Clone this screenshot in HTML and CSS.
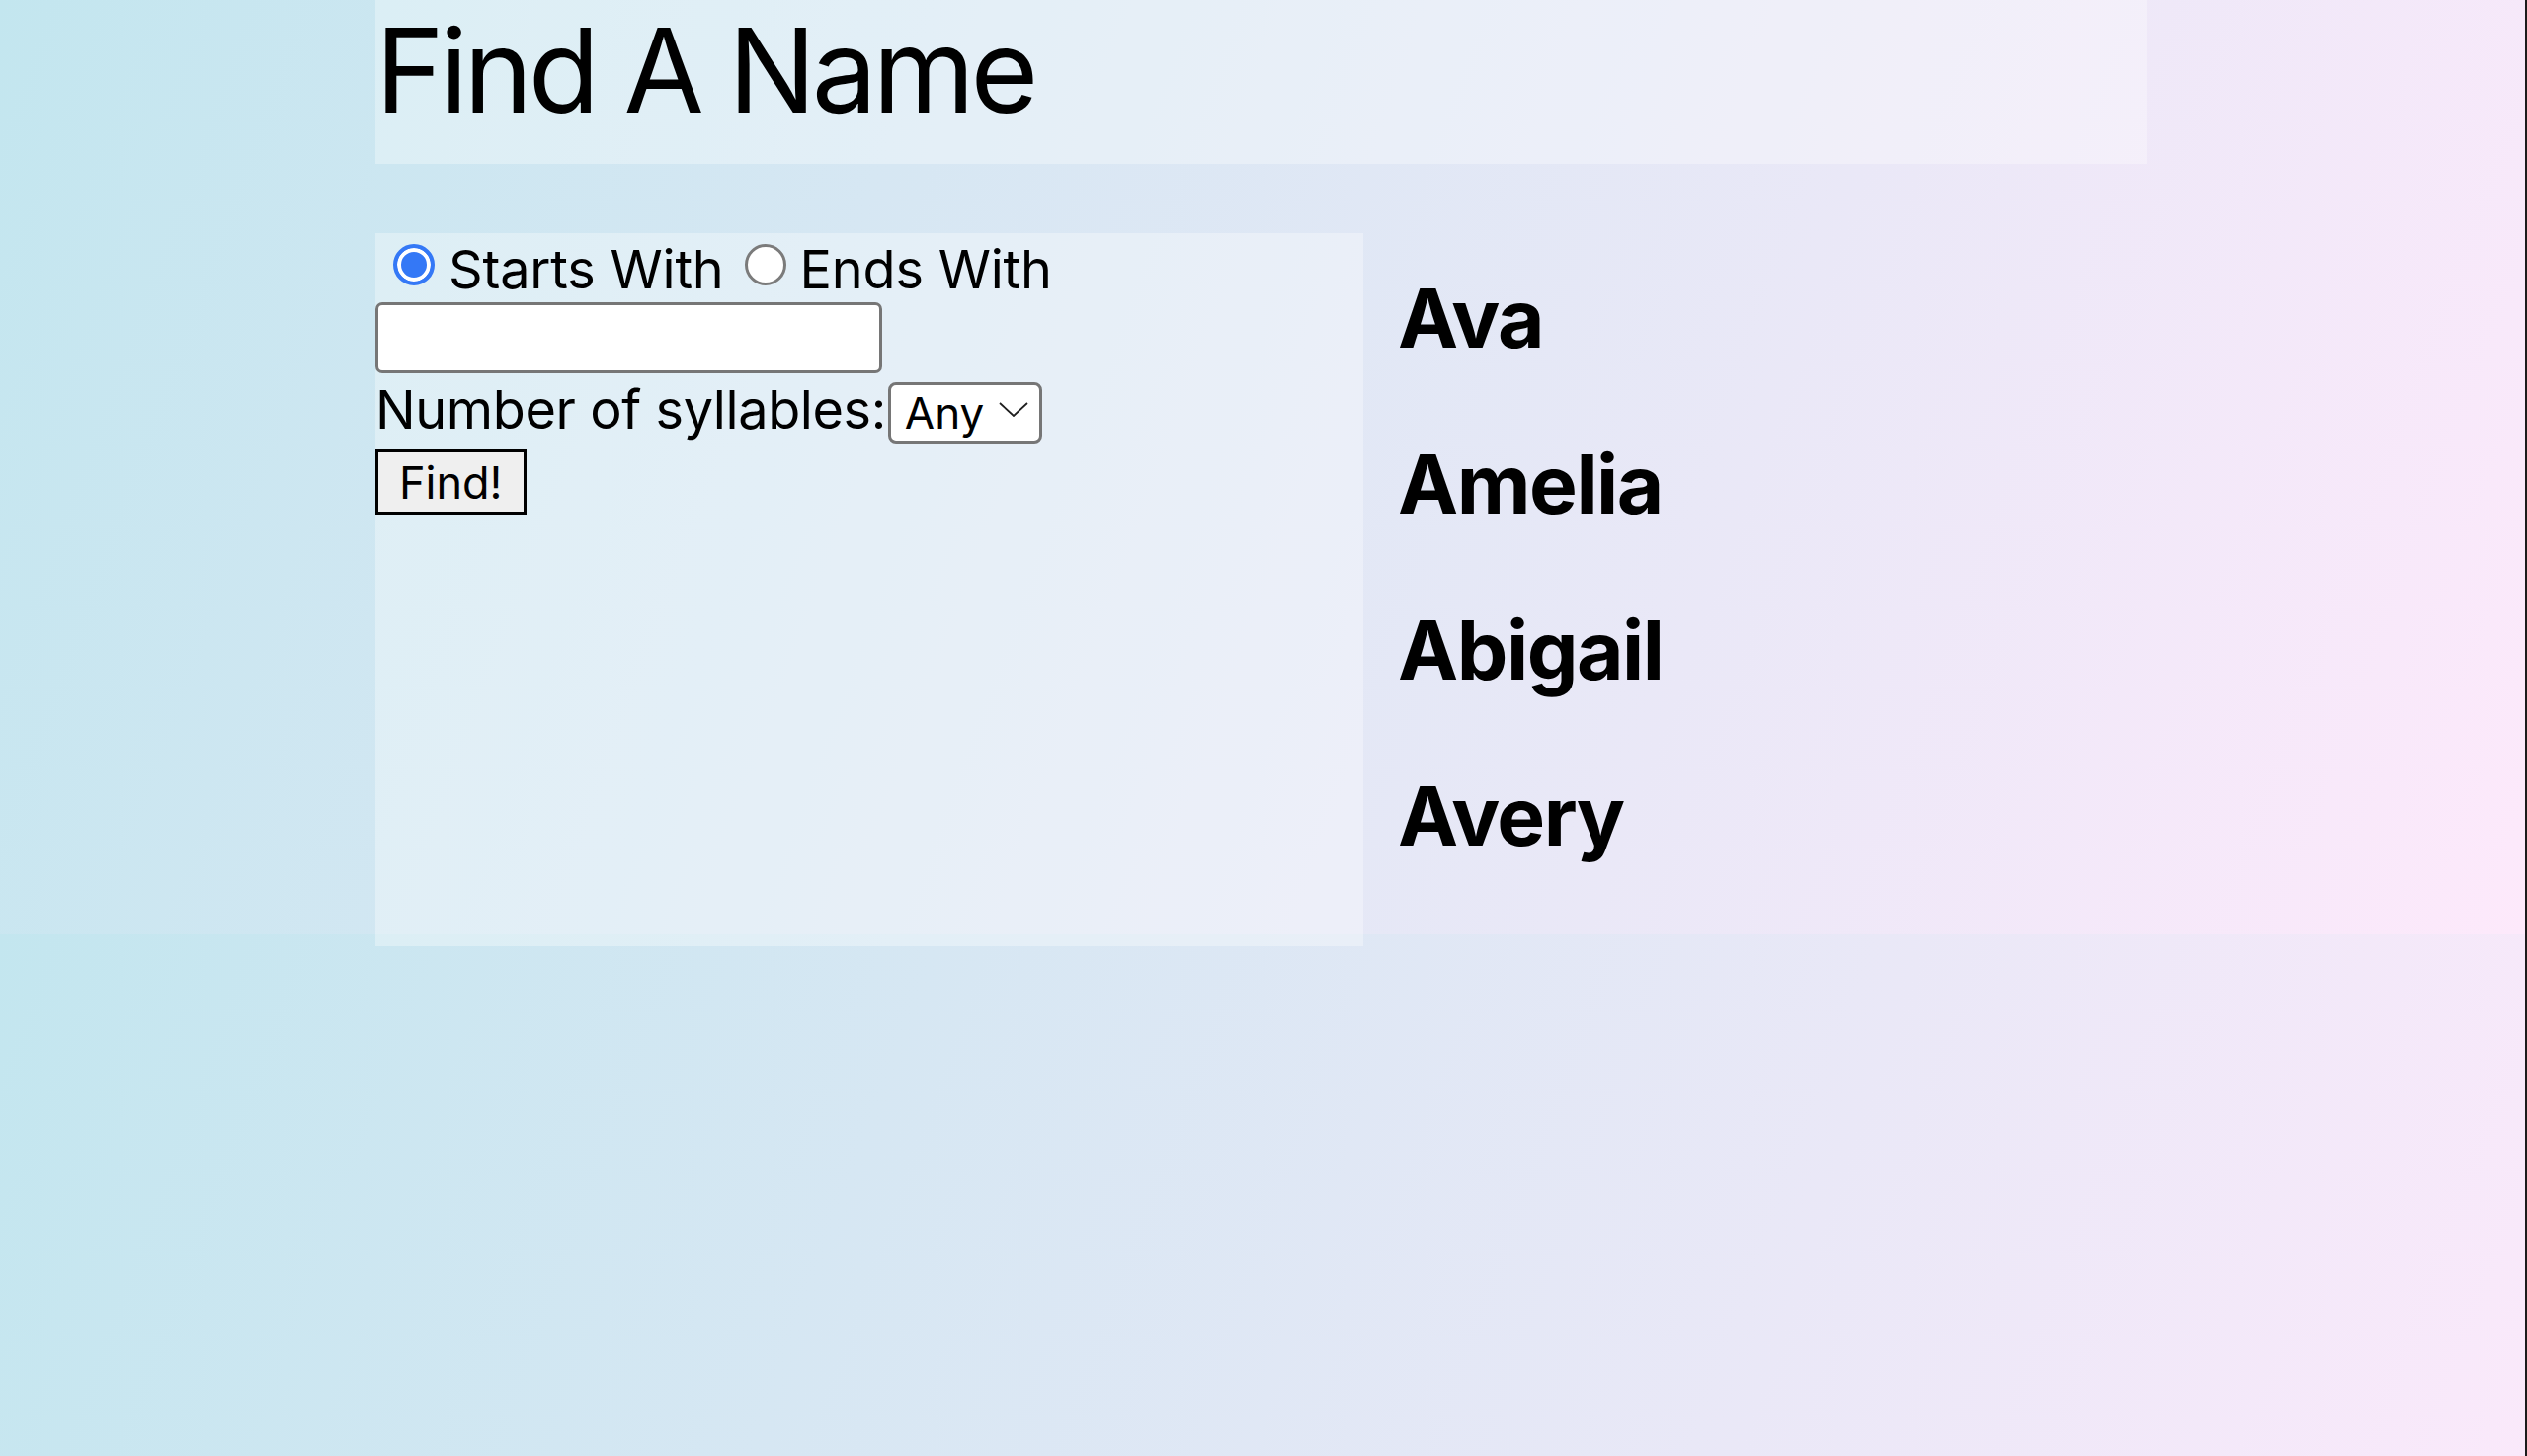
FILE: index.html
```html
<!DOCTYPE html>
<html lang="en">
<head>
<meta charset="utf-8">
<title>Find A Name</title>
<link rel="stylesheet" href="styles.css">
</head>
<body>
<div class="page">
  <header class="title-bar">
    <h1 class="title">Find A Name</h1>
  </header>
  <main class="content">
    <form class="search-panel">
      <div class="mode-row"><input class="radio" type="radio" name="mode" id="starts" checked><label for="starts">Starts With</label> <input class="radio radio-second" type="radio" name="mode" id="ends"><label for="ends">Ends With</label></div>
      <input class="query" type="text" aria-label="Name">
      <div class="syllable-row"><label for="syl">Number of syllables:</label><span class="select-wrap"><select id="syl" class="syl-select"><option>Any</option><option>1</option><option>2</option><option>3</option><option>4</option></select><svg class="chevron" width="30" height="15" viewBox="0 0 30 15"><polyline points="1,1 15,14 29,1" fill="none" stroke="#1f1f1f" stroke-width="1.8"/></svg></span></div>
      <button class="find-btn" type="button">Find!</button>
    </form>
    <section class="results">
      <h2 class="name">Ava</h2>
      <h2 class="name">Amelia</h2>
      <h2 class="name">Abigail</h2>
      <h2 class="name">Avery</h2>
    </section>
  </main>
</div>
<div class="edge"></div>
</body>
</html>
```

FILE: styles.css
```css
html {
  background-color: #c3e6ef;
  background-image: linear-gradient(110deg, #c3e6ef 0%, #fde9fb 100%);
  background-size: 100% 946px;
  background-repeat: repeat;
  background-position: 0 0;
}

body {
  margin: 0;
  font-family: Inter, "Noto Sans", sans-serif;
  color: #000;
}

.page {
  width: 1793px;
  margin-left: 380px;
}

.title-bar {
  height: 166px;
  background: rgba(255, 255, 255, 0.32);
}

.title {
  margin: 0;
  font-size: 118px;
  font-weight: 400;
  line-height: normal;
  letter-spacing: -4.4px;
}

.content {
  display: flex;
  align-items: flex-start;
  margin-top: 70px;
}

.search-panel {
  flex: 0 0 1000px;
  height: 722px;
  background: rgba(255, 255, 255, 0.33);
  font-size: 54px;
  margin: 0;
}

.mode-row {
  padding-top: 4px;
  height: 70px;
  box-sizing: border-box;
  line-height: normal;
  white-space: nowrap;
  letter-spacing: -0.2px;
}

.radio {
  appearance: none;
  -webkit-appearance: none;
  width: 42px;
  height: 42px;
  box-sizing: border-box;
  margin: 0 14px 3px 18px;
  border: 3px solid #7b7b7b;
  border-radius: 50%;
  background: #fff;
  vertical-align: baseline;
}

.radio:checked {
  border: 4px solid #3478f6;
  background: #3478f6;
  box-shadow: inset 0 0 0 4px #fff;
}

.radio-second {
  margin-left: 6px;
}

.query {
  display: block;
  width: 513px;
  height: 72px;
  box-sizing: border-box;
  margin: 0;
  border: 3px solid #767676;
  border-radius: 7px;
  background: #fff;
  font: inherit;
}

.syllable-row {
  margin-top: 4px;
  line-height: normal;
  white-space: nowrap;
  letter-spacing: -0.4px;
}

.select-wrap {
  position: relative;
  display: inline-block;
  margin-left: 2px;
}

.syl-select {
  appearance: none;
  -webkit-appearance: none;
  width: 156px;
  height: 62px;
  box-sizing: border-box;
  margin: 0;
  padding: 0 40px 0 14px;
  border: 3px solid #767676;
  border-radius: 8px;
  background: #fff;
  font-family: Inter, "Noto Sans", sans-serif;
  font-size: 44px;
  color: #000;
}

.chevron {
  position: absolute;
  left: 112px;
  top: 25px;
  pointer-events: none;
}

.find-btn {
  display: block;
  margin-top: 6px;
  height: 66px;
  box-sizing: border-box;
  padding: 0 21px;
  border: 3px solid #000;
  border-radius: 0;
  background: #efefef;
  font-family: Inter, "Noto Sans", sans-serif;
  font-size: 45px;
  color: #000;
}

.results {
  flex: 1;
  display: flex;
  flex-direction: column;
  gap: 69px;
  padding: 37px 0 0 35px;
}

.name {
  margin: 0;
  font-size: 82px;
  font-weight: 700;
  line-height: 99px;
  letter-spacing: -1.5px;
}

.edge {
  position: fixed;
  top: 0;
  right: 0;
  bottom: 0;
  width: 2px;
  background: #1b1b1b;
}
```
